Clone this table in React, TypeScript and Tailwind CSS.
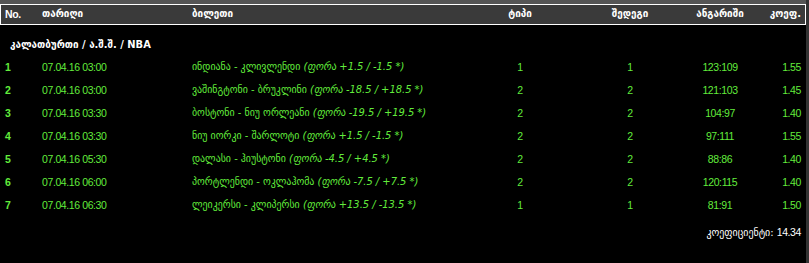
const rows = [
  { n: 1, date: "07.04.16 03:00", match: "ინდიანა - კლივლენდი", fora: "(ფორა +1.5 / -1.5 *)", type: 1, res: 1, score: "123:109", coef: "1.55" },
  { n: 2, date: "07.04.16 03:00", match: "ვაშინგტონი - ბრუკლინი", fora: "(ფორა -18.5 / +18.5 *)", type: 2, res: 2, score: "121:103", coef: "1.45" },
  { n: 3, date: "07.04.16 03:30", match: "ბოსტონი - ნიუ ორლეანი", fora: "(ფორა -19.5 / +19.5 *)", type: 2, res: 2, score: "104:97", coef: "1.40" },
  { n: 4, date: "07.04.16 03:30", match: "ნიუ იორკი - შარლოტი", fora: "(ფორა +1.5 / -1.5 *)", type: 2, res: 2, score: "97:111", coef: "1.55" },
  { n: 5, date: "07.04.16 05:30", match: "დალასი - ჰიუსტონი", fora: "(ფორა -4.5 / +4.5 *)", type: 2, res: 2, score: "88:86", coef: "1.40" },
  { n: 6, date: "07.04.16 06:00", match: "პორტლენდი - ოკლაჰომა", fora: "(ფორა -7.5 / +7.5 *)", type: 2, res: 2, score: "120:115", coef: "1.40" },
  { n: 7, date: "07.04.16 06:30", match: "ლეიკერსი - კლიპერსი", fora: "(ფორა +13.5 / -13.5 *)", type: 1, res: 1, score: "81:91", coef: "1.50" },
];

const cols = "grid grid-cols-[37px_150px_278px_100px_120px_60px_51px]";
// narrow latin digits, like the original's condensed face
const num = "font-['Liberation_Sans',sans-serif] text-[10.5px] tracking-[-0.4px]";

export default function App() {
  return (
    <div
      className="flex h-[263px] w-[809px] overflow-hidden bg-black text-[11px] text-white"
      style={{ fontFamily: '"DejaVu Sans Condensed", "DejaVu Sans", sans-serif' }}
    >
      <div className="flex w-[806px] flex-col">
        <div className="h-1 bg-[#555555]" />
        <div className={`${cols} h-[21px] items-center border border-white bg-[#3a3a3a] pl-1 font-bold`}>
          <span className={num}>No.</span>
          <span>თარიღი</span>
          <span>ბილეთი</span>
          <span className="text-center">ტიპი</span>
          <span className="text-center">შედეგი</span>
          <span className="text-center">ანგარიში</span>
          <span className="text-right">კოეფ.</span>
        </div>

        <div className="mt-[13px] pl-[10px] font-bold leading-[14px]">კალათბურთი / ა.შ.შ. / NBA</div>

        <div className="mt-[4px] pl-[5px] text-[#62ec3c]">
          {rows.map((r) => (
            <div key={r.n} className={`${cols} h-[23px] items-center`}>
              <span className={`${num} font-bold`}>{r.n}</span>
              <span className={num}>{r.date}</span>
              <span className="whitespace-nowrap">
                {r.match} <i>{r.fora}</i>
              </span>
              <span className={`${num} text-center`}>{r.type}</span>
              <span className={`${num} text-center`}>{r.res}</span>
              <span className={`${num} text-center`}>{r.score}</span>
              <span className={`${num} text-right`}>{r.coef}</span>
            </div>
          ))}
        </div>

        <div className="mt-[8px] w-[801px] text-right leading-[14px]">
          კოეფიციენტი: <span className={num}>14.34</span>
        </div>
      </div>
      <div className="w-[3px] bg-[#333333]" />
    </div>
  );
}
